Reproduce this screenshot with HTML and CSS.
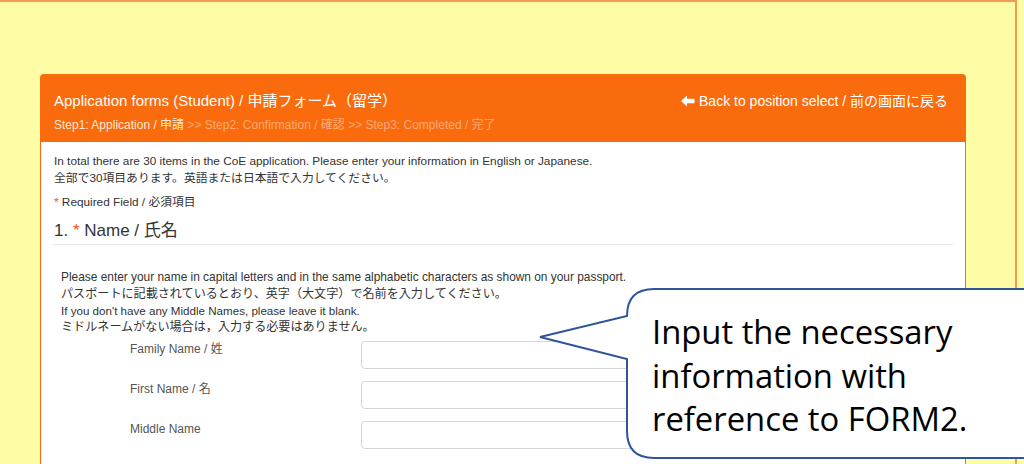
FILE: index.html
```html
<!DOCTYPE html>
<html lang="ja">
<head>
    <meta charset="UTF-8">
    <meta name="viewport" content="width=device-width, initial-scale=1.0">
    <title>Application forms (Student)</title>
    <link rel="stylesheet" href="styles.css">
</head>
<body>

    <div class="frame">
        <div class="panel">
            <div class="panel-head">
                <div class="head-row">
                    <h1 class="title">Application forms (Student) / 申請フォーム（留学）</h1>
                    <a class="back-link" href="#">
                        <svg class="arrow" viewBox="0 0 14 12" width="14" height="12">
                            <path d="M0 6 L6 0.5 V3.8 H13.5 V8.2 H6 V11.5 Z" fill="#fff"/>
                        </svg>
                        Back to position select / 前の画面に戻る
                    </a>
                </div>
                <div class="steps">
                    <span class="step-on">Step1: Application / 申請</span>
                    &gt;&gt; Step2: Confirmation / 確認 &gt;&gt; Step3: Completed / 完了
                </div>
            </div>

            <div class="panel-body">
                <p class="intro">In total there are 30 items in the CoE application. Please enter your information in English or Japanese.<br>全部で30項目あります。英語または日本語で入力してください。</p>
                <p class="required"><span class="star">*</span> Required Field / 必須項目</p>

                <h2 class="section">1. <span class="star">*</span> Name / 氏名</h2>

                <div class="note">
                    <p class="wide">Please enter your name in capital letters and in the same alphabetic characters as shown on your passport.</p>
                    <p>パスポートに記載されているとおり、英字（大文字）で名前を入力してください。</p>
                    <p class="small">If you don't have any Middle Names, please leave it blank.</p>
                    <p>ミドルネームがない場合は，入力する必要はありません。</p>
                </div>

                <div class="field">
                    <label>Family Name / 姓</label>
                    <input type="text">
                </div>
                <div class="field">
                    <label>First Name / 名</label>
                    <input type="text">
                </div>
                <div class="field">
                    <label>Middle Name</label>
                    <input type="text">
                </div>
            </div>
        </div>
    </div>

    <!-- Callout over the screenshot -->
    <svg class="callout-shape" viewBox="0 0 1024 464" width="1024" height="464">
        <path d="M1030 289 H654 Q627 289 627 316 L540 337 L627 359 V431 Q627 458 654 458 H1030 Z"
              fill="#fff" stroke="#2f5597" stroke-width="2"/>
    </svg>
    <div class="callout-text">Input the necessary<br>information with<br>reference to FORM2.</div>

</body>
</html>
```

FILE: styles.css
```css
* {
    margin: 0;
    padding: 0;
    box-sizing: border-box;
}

body {
    width: 1024px;
    height: 464px;
    overflow: hidden;
    background: #fffca6;
    font-family: 'Liberation Sans', Arial, 'Noto Sans CJK JP', sans-serif;
    color: #333;
    position: relative;
}

/* frame of the screenshot */
.frame {
    width: 1017px;
    height: 464px;
    border-top: 2px solid #f79a55;
    border-right: 2px solid #f79a55;
    padding: 72px 0 0 40px;
}

.panel {
    width: 926px;
    height: 400px;
    background: #fff;
    border: 1px solid #f96b0c;
    border-bottom: none;
    border-radius: 4px 4px 0 0;
}

/* orange header */
.panel-head {
    background: #f96b0c;
    height: 67px;
    padding: 16px 17px 0 13px;
    color: #fff;
}

.head-row {
    display: flex;
    justify-content: space-between;
    align-items: center;
}

.title {
    font-size: 15px;
    font-weight: normal;
    line-height: 20px;
}

.back-link {
    color: #fff;
    text-decoration: none;
    font-size: 14px;
    line-height: 20px;
    display: flex;
    align-items: center;
    gap: 4px;
}

.steps {
    margin-top: 6px;
    font-size: 12px;
    line-height: 16px;
    color: #fcaa78;
}

.step-on {
    color: #ffe8d6;
}

/* body of the form */
.panel-body {
    padding: 11px 13px 0 13px;
}

.intro {
    font-size: 11.8px;
    line-height: 17px;
}

.required {
    margin-top: 7px;
    font-size: 11.8px;
    line-height: 16px;
}

.star {
    color: #f0531c;
}

.section {
    margin-top: 10px;
    font-size: 17px;
    font-weight: normal;
    line-height: 22px;
    padding-bottom: 2px;
    border-bottom: 1px solid #e8e8e8;
    margin-left: -2px;
    padding-left: 2px;
    margin-right: -1px;
}

.note {
    margin-top: 24px;
    padding-left: 7px;
    font-size: 12.1px;
    line-height: 16.8px;
}

.note .wide {
    font-size: 11.9px;
}

.note .small {
    font-size: 11.6px;
}

.field {
    display: flex;
    align-items: flex-start;
    margin-top: 12px;
}

.note + .field {
    margin-top: 5px;
}

.field label {
    width: 307px;
    padding-left: 76px;
    font-size: 12px;
    line-height: 16px;
    color: #555;
}

.field input {
    width: 590px;
    height: 28px;
    border: 1px solid #d6d6d6;
    border-radius: 4px;
    background: #fff;
}

/* callout */
.callout-shape {
    position: absolute;
    top: 0;
    left: 0;
}

.callout-text {
    position: absolute;
    left: 652px;
    top: 310px;
    font-family: 'Open Sans', 'Noto Sans', sans-serif;
    font-size: 32.8px;
    line-height: 43.5px;
    color: #000;
}
```
